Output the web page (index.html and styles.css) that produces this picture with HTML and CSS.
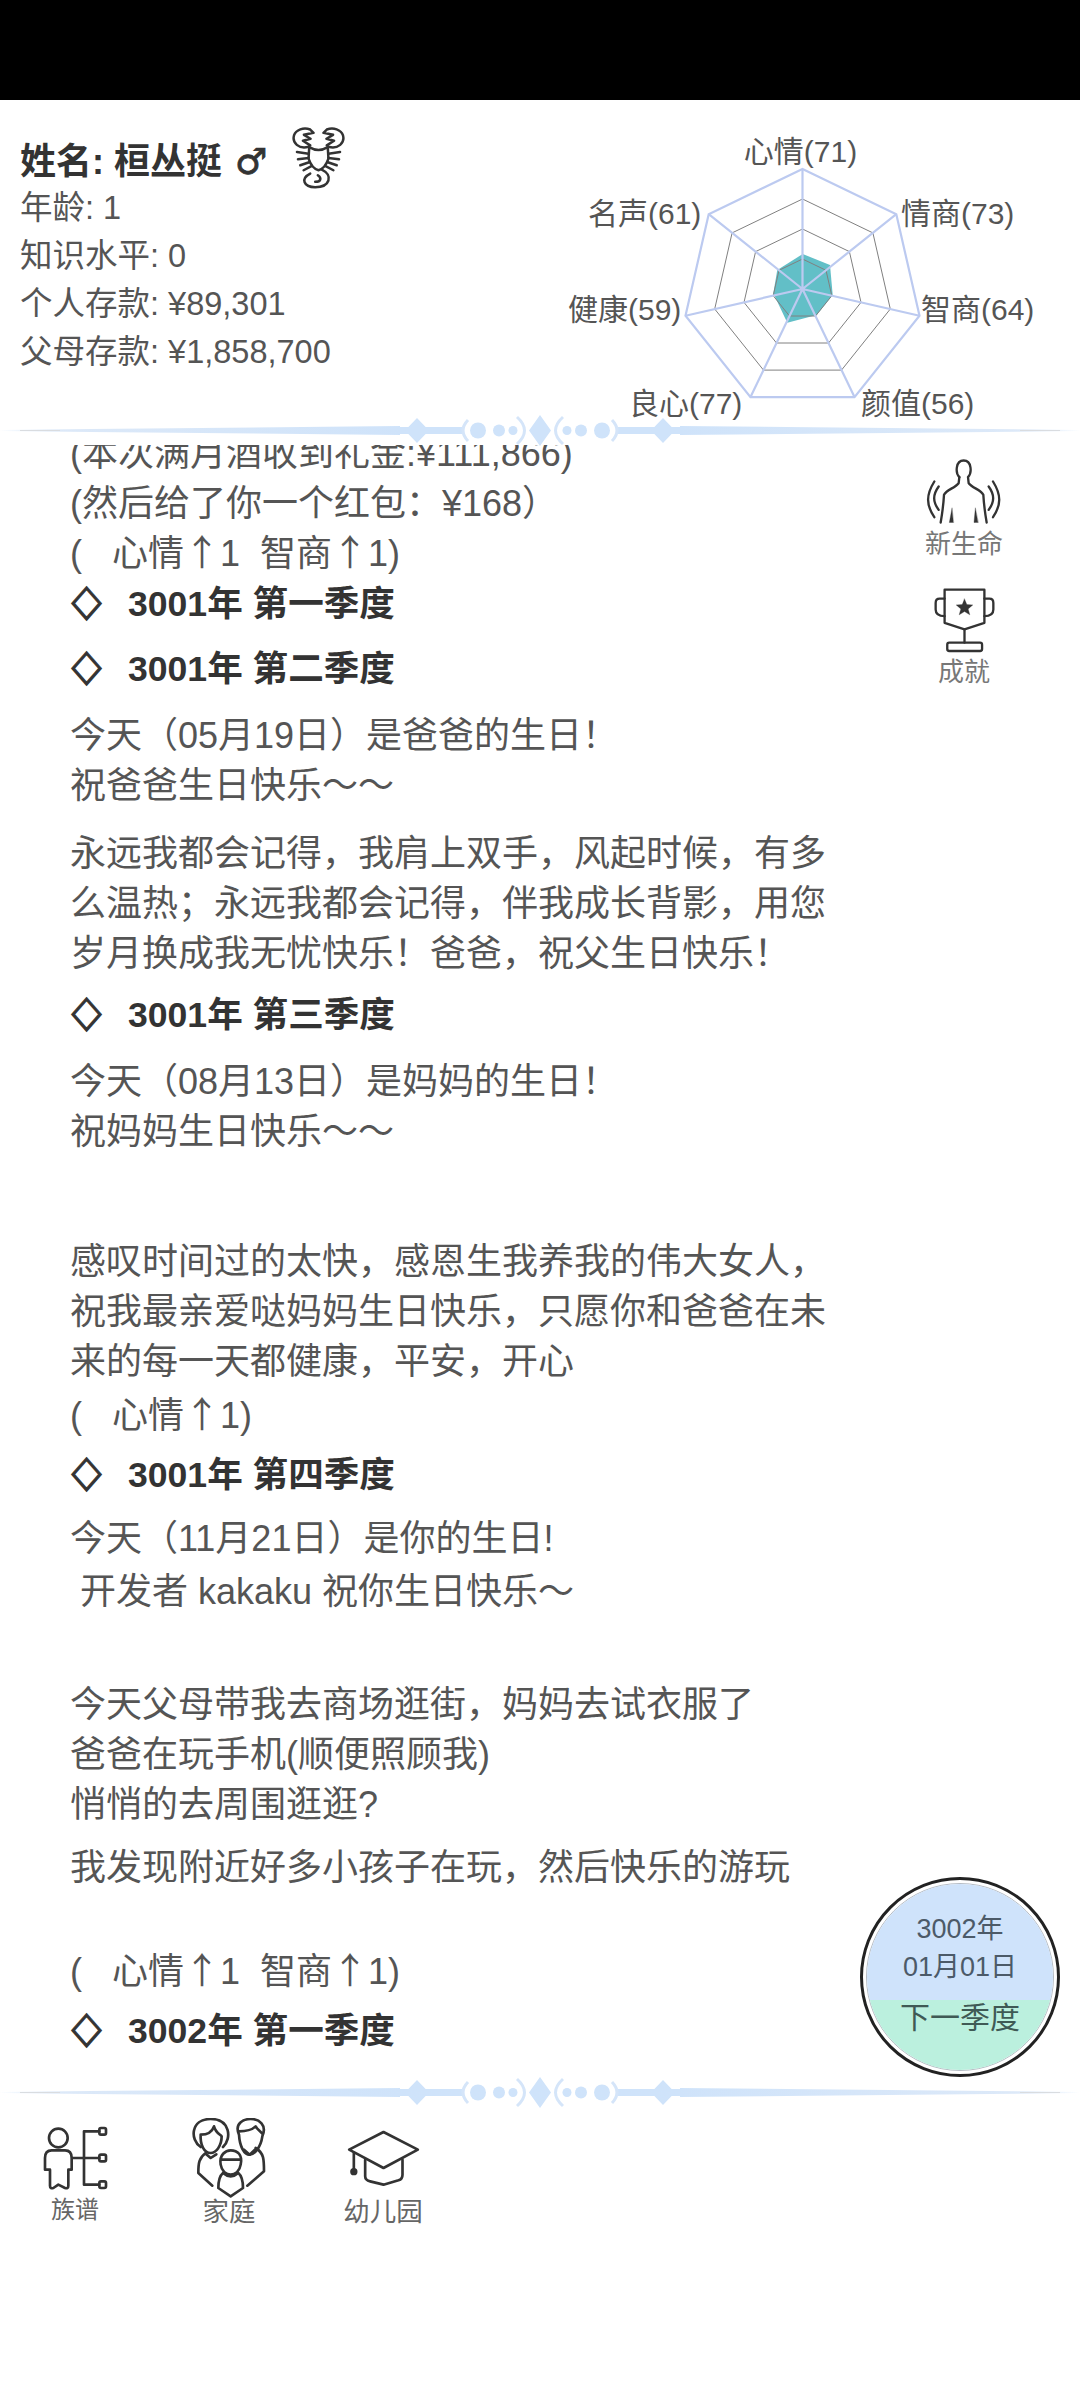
FILE: index.html
```html
<!DOCTYPE html>
<html lang="zh">
<head>
<meta charset="utf-8">
<title>人生模拟</title>
<link rel="stylesheet" href="styles.css">
</head>
<body>
<svg class="defs" width="0" height="0" aria-hidden="true">
  <defs>
    <linearGradient id="band" x1="0" x2="1" y1="0" y2="0">
      <stop offset="0" stop-color="#cfe3fa" stop-opacity="0"/>
      <stop offset="0.12" stop-color="#dde9f8"/>
      <stop offset="1" stop-color="#cfe3fa"/>
    </linearGradient>
    <linearGradient id="bandR" x1="1" x2="0" y1="0" y2="0">
      <stop offset="0" stop-color="#cfe3fa" stop-opacity="0"/>
      <stop offset="0.12" stop-color="#dde9f8"/>
      <stop offset="1" stop-color="#cfe3fa"/>
    </linearGradient>
    <symbol id="ornament" viewBox="0 0 1080 30" overflow="visible">
      <polygon points="0,15 90,14 400,11 400,20 90,17 0,16" fill="url(#band)"/>
      <polygon points="1080,15 990,14 680,11 680,20 990,17 1080,16" fill="url(#bandR)"/>
      <rect x="400" y="12" width="62" height="7" fill="#cfe3fa"/>
      <rect x="618" y="12" width="62" height="7" fill="#cfe3fa"/>
      <rect x="20" y="15" width="40" height="1" fill="#d9dce0"/>
      <rect x="1020" y="15" width="40" height="1" fill="#d9dce0"/>
      <path d="M417 3 L429 15.5 L417 28 L405 15.5 Z M663 3 L675 15.5 L663 28 L651 15.5 Z M540 0 L551 15.5 L540 31 L529 15.5 Z" fill="#cfe3fa"/>
      <circle cx="478" cy="15.5" r="8" fill="#cfe3fa"/>
      <circle cx="499" cy="15.5" r="6" fill="#cfe3fa"/>
      <circle cx="513" cy="15.5" r="4.5" fill="#cfe3fa"/>
      <circle cx="602" cy="15.5" r="8" fill="#cfe3fa"/>
      <circle cx="581" cy="15.5" r="6" fill="#cfe3fa"/>
      <circle cx="567" cy="15.5" r="4.5" fill="#cfe3fa"/>
      <path d="M468 5 Q458 15.5 468 26 M517 2 Q532 15.5 517 29 M563 2 Q548 15.5 563 29 M612 5 Q622 15.5 612 26" fill="none" stroke="#d5e5f9" stroke-width="3"/>
    </symbol>
  </defs>
</svg>

<div class="page">
  <div class="status-bar"></div>

  <header class="header">
    <div class="info">
      <div class="name-row">
        <span class="name">姓名: 桓丛挺 <span class="gender">♂</span></span>
        <svg class="scorpion" viewBox="880 25 160 186" width="53" height="62">
          <path d="M930 84 C900 92 880 72 886 50 C892 32 915 25 935 32 L945 42 L916 48 L936 60 L913 66 L935 80"/>
          <path d="M990 84 C1020 92 1040 72 1034 50 C1028 32 1005 25 985 32 L975 42 L1004 48 L984 60 L1007 66 L985 80"/>
          <path d="M932 85 Q960 102 988 85 L990 120 Q980 150 960 155 Q940 150 930 120 Z"/>
          <path d="M930 105 L895 100 M930 118 L898 122 M934 130 L905 140 M940 142 L915 155 M990 105 L1025 100 M990 118 L1022 122 M986 130 L1015 140 M980 142 L1005 155"/>
          <path d="M970 153 C1005 170 995 206 950 206 C915 206 905 180 935 165 M950 190 C968 190 970 178 958 170"/>
        </svg>
      </div>
      <div class="stat">年龄: 1</div>
      <div class="stat">知识水平: 0</div>
      <div class="stat">个人存款: ¥89,301</div>
      <div class="stat">父母存款: ¥1,858,700</div>
    </div>
    <svg class="radar" viewBox="560 120 520 295" width="520" height="295">
      <g class="ring">
        <polygon points="802.5,199 872.9,232.9 890.3,309 841.5,370.1 763.5,370.1 714.7,309 732.1,232.9"/>
        <polygon points="802.5,229 849.4,251.6 861,302.4 828.5,343 776.5,343 744,302.4 755.6,251.6"/>
      </g>
      <polygon class="data" points="802.7,254 830,265 832.7,295 816.7,315 787.3,322.7 773.3,293.3 777.3,270"/>
      <g class="ring">
        <polygon points="802.5,259 826,270.3 831.8,295.7 815.5,316 789.5,316 773.2,295.7 779,270.3"/>
      </g>
      <g class="axis">
        <polygon points="802.5,169 896.3,214.2 919.5,315.7 854.5,397.1 750.5,397.1 685.5,315.7 708.7,214.2"/>
        <path d="M802.5 289 L802.5 169 M802.5 289 L896.3 214.2 M802.5 289 L919.5 315.7 M802.5 289 L854.5 397.1 M802.5 289 L750.5 397.1 M802.5 289 L685.5 315.7 M802.5 289 L708.7 214.2"/>
      </g>
      <g class="radar-label">
        <text x="800.5" y="162" text-anchor="middle">心情(71)</text>
        <text x="901" y="224">情商(73)</text>
        <text x="921" y="320">智商(64)</text>
        <text x="861" y="414">颜值(56)</text>
        <text x="629" y="414">良心(77)</text>
        <text x="568" y="320">健康(59)</text>
        <text x="588" y="224">名声(61)</text>
      </g>
    </svg>
  </header>

  <svg class="divider"><use href="#ornament"/></svg>

  <main class="viewport">
    <div class="log">
      <p class="line">(本次满月酒收到礼金:¥111,866)</p>
      <p class="line">(然后给了你一个红包：¥168）</p>
      <p class="line">(   心情<span class="arrow">↑</span>1  智商<span class="arrow">↑</span>1)</p>
      <h2 class="season"><span class="mark">◇</span>3001年 第一季度</h2>
      <h2 class="season gap-15"><span class="mark">◇</span>3001年 第二季度</h2>
      <p class="line gap-17">今天（05月19日）是爸爸的生日！<br>祝爸爸生日快乐～～</p>
      <p class="line gap-18">永远我都会记得，我肩上双手，风起时候，有多么温热；永远我都会记得，伴我成长背影，用您岁月换成我无忧快乐！爸爸，祝父生日快乐！</p>
      <h2 class="season gap-11"><span class="mark">◇</span>3001年 第三季度</h2>
      <p class="line gap-17">今天（08月13日）是妈妈的生日！<br>祝妈妈生日快乐～～</p>
      <p class="line gap-80">感叹时间过的太快，感恩生我养我的伟大女人，祝我最亲爱哒妈妈生日快乐，只愿你和爸爸在未来的每一天都健康，平安，开心</p>
      <p class="line gap-4">(   心情<span class="arrow">↑</span>1)</p>
      <h2 class="season gap-9"><span class="mark">◇</span>3001年 第四季度</h2>
      <p class="line gap-14">今天（11月21日）是你的生日!</p>
      <p class="line gap-3"> 开发者 kakaku 祝你生日快乐～</p>
      <p class="line gap-63">今天父母带我去商场逛街，妈妈去试衣服了<br>爸爸在玩手机(顺便照顾我)<br>悄悄的去周围逛逛?</p>
      <p class="line gap-13">我发现附近好多小孩子在玩，然后快乐的游玩</p>
      <p class="line gap-54">(   心情<span class="arrow">↑</span>1  智商<span class="arrow">↑</span>1)</p>
      <h2 class="season gap-9"><span class="mark">◇</span>3002年 第一季度</h2>
    </div>
  </main>

  <svg class="divider"><use href="#ornament"/></svg>

  <nav class="nav">
    <div class="nav-item">
      <svg class="ico" viewBox="120 175 210 240" width="70" height="80">
        <circle cx="175" cy="235" r="28"/>
        <path d="M155 272 H195 Q215 272 215 295 V330 H205 V378 Q205 388 195 385 L175 375 L160 385 Q150 388 150 378 V330 H135 V295 Q135 272 155 272 Z"/>
        <path d="M218 295 H252 M298 215 H252 V375 H298 M252 295 H298"/>
        <rect x="298" y="205" width="20" height="20" rx="5"/>
        <rect x="298" y="285" width="20" height="20" rx="5"/>
        <rect x="298" y="365" width="20" height="20" rx="5"/>
      </svg>
      <span class="nav-label nav-label-small">族谱</span>
    </div>
    <div class="nav-item">
      <svg class="ico" viewBox="570 175 240 240" width="80" height="80">
        <path d="M605 262 C572 240 575 178 635 178 C692 178 700 235 672 262"/>
        <path d="M605 225 C625 225 640 215 645 200 C650 220 665 225 668 230 C668 260 650 280 635 280 C615 280 603 255 605 225"/>
        <path d="M720 225 C705 190 735 178 755 178 C780 178 805 195 790 230 C785 265 765 285 752 285 C735 285 722 260 720 225 M720 215 C745 215 760 210 770 200 C775 210 785 215 790 222"/>
        <path d="M620 280 C600 295 598 310 598 340 L640 378 M620 282 L635 295 L652 284"/>
        <path d="M770 265 C795 280 795 300 795 335 L745 378 M735 270 L752 285 L770 268"/>
        <path d="M665 315 C660 285 680 272 695 272 C715 272 732 285 725 315 C722 335 708 345 695 345 C682 345 668 335 665 315 M665 300 H725"/>
        <path d="M672 340 C660 350 658 365 658 385 L695 410 L732 385 C732 365 730 350 718 340 M672 340 Q695 360 718 340"/>
      </svg>
      <span class="nav-label">家庭</span>
    </div>
    <div class="nav-item">
      <svg class="ico" viewBox="1040 175 230 240" width="77" height="80">
        <path d="M1155 217 L1258 270 L1155 325 L1052 270 Z"/>
        <path d="M1100 300 V350 Q1100 362 1115 365 L1155 375 L1200 362 Q1212 358 1212 345 V300"/>
        <path d="M1066 280 V332"/>
        <circle class="ico-dot" cx="1066" cy="336" r="7"/>
      </svg>
      <span class="nav-label">幼儿园</span>
    </div>
  </nav>

  <aside class="side">
    <div class="side-item">
      <svg class="ico ico-thin" viewBox="140 55 225 200" width="75" height="67">
        <path d="M240 112 C228 100 228 62 253 62 C278 62 278 100 266 112 L268 130 C280 145 305 150 312 165 C314 200 318 225 322 248"/>
        <path d="M240 112 L238 130 C226 145 201 150 194 165 C192 200 188 225 184 248"/>
        <path class="ico-solid" d="M218 205 L210 248 L222 248 Z M288 205 L284 248 L296 248 Z"/>
        <path d="M165 125 C140 165 140 195 165 232 M178 140 C160 165 160 185 178 210 M341 125 C366 165 366 195 341 232 M328 140 C346 165 346 185 328 210"/>
      </svg>
      <span class="side-label">新生命</span>
    </div>
    <div class="side-item">
      <svg class="ico ico-thin" viewBox="160 435 190 200" width="63" height="67">
        <path d="M195 445 H315 V545 L255 565 L195 545 Z"/>
        <path d="M195 472 H180 Q168 472 168 485 V505 Q168 525 195 525 M315 472 H330 Q342 472 342 485 V505 Q342 525 315 525"/>
        <path d="M255 565 V605"/>
        <rect x="203" y="605" width="105" height="25" rx="6"/>
        <polygon class="ico-solid" points="255,473 262,490 280,491 266,503 271,521 255,511 239,521 244,503 230,491 248,490"/>
      </svg>
      <span class="side-label">成就</span>
    </div>
  </aside>

  <button class="next" type="button">
    <span class="next-inner">
      <span class="next-date">3002年<br>01月01日</span>
      <span class="next-action">下一季度</span>
    </span>
  </button>
</div>
</body>
</html>
```

FILE: styles.css
```css
* { box-sizing: border-box; }

html, body {
  margin: 0;
  padding: 0;
  background: #fff;
}

body {
  font-family: "Liberation Sans", "Noto Sans CJK SC", sans-serif;
  color: #555;
}

.defs { position: absolute; }

.page {
  position: relative;
  width: 1080px;
  height: 2388px;
  display: flex;
  flex-direction: column;
  overflow: hidden;
}

.status-bar {
  height: 100px;
  background: #000;
  flex: none;
}

.header {
  flex: none;
  height: 315px;
  padding: 20px 0 0 20px;
  display: flex;
  justify-content: space-between;
  align-items: flex-start;
}

.info { padding-top: 11px; }

.name-row {
  height: 53px;
  display: flex;
  align-items: center;
  gap: 25px;
}

.name {
  font-size: 36px;
  font-weight: 700;
  color: #333;
  white-space: nowrap;
}

.gender {
  margin-left: 3px;
  font-family: "DejaVu Sans", sans-serif;
  font-size: 36px;
  -webkit-text-stroke: 0.8px #333;
}

.scorpion {
  fill: none;
  stroke: #333;
  stroke-width: 7.5;
  stroke-linejoin: round;
  stroke-linecap: round;
}

.stat {
  font-size: 32.5px;
  line-height: 48px;
  white-space: nowrap;
}

.radar { overflow: visible; flex: none; }

.ring polygon { fill: none; stroke: #808080; stroke-width: 1; }
.data { fill: #62bfc7; }
.axis polygon, .axis path { fill: none; stroke: #bccaf0; stroke-width: 2.2; }
.radar-label text {
  font-size: 30px;
  fill: #555;
}

.divider {
  display: block;
  flex: none;
  width: 1080px;
  height: 30px;
  overflow: visible;
}

.viewport {
  flex: none;
  height: 1632px;
  overflow: hidden;
}

.log {
  width: 845px;
  margin-top: -16px;
  padding-left: 70px;
}

.line {
  margin: 0;
  font-size: 36px;
  line-height: 50px;
  white-space: pre-wrap;
}

.arrow {
  font-family: "Noto Sans CJK SC", sans-serif;
  line-height: 0;
}

.season {
  margin: 0;
  font-size: 35.6px;
  font-weight: 700;
  line-height: 50px;
  color: #333;
  white-space: pre;
}

.mark {
  display: inline-block;
  width: 58px;
  padding-left: 4px;
  font-family: "DejaVu Sans", sans-serif;
  line-height: 1;
  -webkit-text-stroke: 0.8px #333;
  transform: translateY(-4px) scale(1.1, 1.25);
}

.gap-3 { margin-top: 3px; }
.gap-4 { margin-top: 4px; }
.gap-9 { margin-top: 9px; }
.gap-11 { margin-top: 11px; }
.gap-13 { margin-top: 13px; }
.gap-14 { margin-top: 14px; }
.gap-15 { margin-top: 15px; }
.gap-17 { margin-top: 17px; }
.gap-18 { margin-top: 18px; }
.gap-54 { margin-top: 54px; }
.gap-63 { margin-top: 63px; }
.gap-80 { margin-top: 80px; }

.nav {
  flex: none;
  display: flex;
  margin-left: -2px;
  padding-top: 11px;
}

.nav-item {
  width: 154px;
  display: flex;
  flex-direction: column;
  align-items: center;
}

.nav-label {
  font-size: 26.5px;
  line-height: 28px;
  color: #666;
}

.nav-label-small {
  font-size: 24px;
  margin-top: -2px;
}

.ico {
  display: block;
  fill: none;
  stroke: #333;
  stroke-width: 8;
  stroke-linecap: round;
  stroke-linejoin: round;
}

.ico-thin { stroke-width: 7; }
.ico .ico-solid, .ico .ico-dot { fill: #333; }
.ico .ico-solid { stroke-width: 1; }

.side {
  position: absolute;
  top: 458px;
  left: 914px;
  width: 100px;
  display: flex;
  flex-direction: column;
  align-items: center;
  gap: 23px;
}

.side-item {
  display: flex;
  flex-direction: column;
  align-items: center;
}

.side-label {
  font-size: 26px;
  line-height: 38px;
  color: #777;
}

.next {
  position: absolute;
  left: 860px;
  top: 1877px;
  width: 200px;
  height: 200px;
  padding: 3px;
  border: 3px solid #222;
  border-radius: 50%;
  background: #fff;
  font-family: inherit;
}

.next-inner {
  display: flex;
  flex-direction: column;
  width: 100%;
  height: 100%;
  border: 1px solid #b5bcc4;
  border-radius: 50%;
  overflow: hidden;
}

.next-date {
  display: block;
  height: 116px;
  padding-top: 26px;
  font-size: 27px;
  line-height: 38px;
  text-align: center;
  background: #cfe3fb;
  color: #4c5a68;
}

.next-action {
  display: block;
  flex: 1;
  font-size: 30px;
  line-height: 36px;
  text-align: center;
  background: #bbf0de;
  color: #3f5a55;
}
```
